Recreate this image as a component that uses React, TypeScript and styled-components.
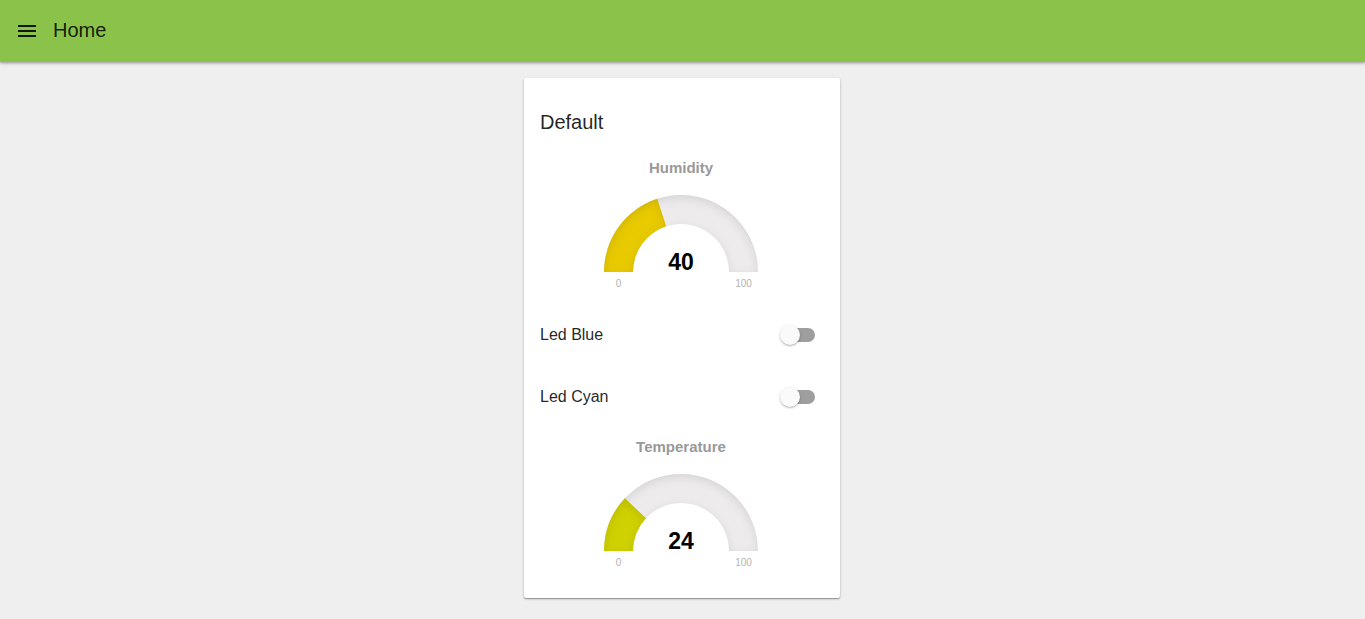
import React, { useId, useState } from "react";
import styled, { createGlobalStyle } from "styled-components";

const GlobalStyle = createGlobalStyle`
  *, *::before, *::after { box-sizing: border-box; }
  body {
    margin: 0;
    min-height: 100vh;
    background: #efefef;
    color: rgba(0, 0, 0, 0.87);
    font-family: "Liberation Sans", Arial, sans-serif;
  }
`;

const Toolbar = styled.header`
  display: flex;
  align-items: center;
  gap: 14px;
  height: 62px;
  padding: 0 15px;
  background: #8bc34a;
  box-shadow: 0 1px 3px rgba(0, 0, 0, 0.4);
`;

const MenuButton = styled.button`
  display: flex;
  width: 24px;
  height: 24px;
  padding: 0;
  border: 0;
  background: none;
  color: rgba(0, 0, 0, 0.87);
  cursor: pointer;
`;

const PageTitle = styled.h1`
  margin: 0;
  font-size: 20px;
  font-weight: 400;
  line-height: 24px;
  padding-bottom: 2px;
`;

const Main = styled.main`
  display: flex;
  justify-content: center;
  padding: 16px 17px 16px 16px;
`;

const Card = styled.section`
  width: 100%;
  max-width: 316px;
  padding: 17px 16px 15px;
  border-radius: 2px;
  background: #fff;
  box-shadow: 0 1px 3px rgba(0, 0, 0, 0.2), 0 1px 1px rgba(0, 0, 0, 0.28);
`;

const CardTitle = styled.h2`
  margin: 0;
  font-size: 20px;
  font-weight: 400;
  line-height: 54px;
`;

const GaugeBox = styled.figure`
  display: flex;
  flex-direction: column;
  align-items: center;
  height: 155px;
  margin: 0;
  padding: 10px 2px 0 0;
`;

const GaugeTitle = styled.figcaption`
  height: 36px;
  color: #999;
  font-size: 15px;
  font-weight: 700;
  line-height: 18px;
`;

const Dial = styled.div`
  position: relative;
  width: 154px;
  height: 77px;
`;

const DialArc = styled.svg`
  display: block;
`;

const DialValue = styled.output`
  position: absolute;
  right: 0;
  bottom: -4px;
  left: 0;
  color: #010101;
  font-size: 23px;
  font-weight: 700;
  line-height: 28px;
  text-align: center;
`;

const DialRange = styled.div`
  display: flex;
  justify-content: space-between;
  width: 154px;
  padding-top: 5px;
  color: #b3b3b3;
  font-size: 10px;
  line-height: 14px;
`;

const RangeLabel = styled.span`
  width: 29px;
  text-align: center;
`;

const SwitchRow = styled.label`
  display: flex;
  align-items: center;
  justify-content: space-between;
  height: 62px;
  padding-right: 8px;
  font-size: 16px;
  line-height: 20px;
  cursor: pointer;
`;

const Switch = styled.input`
  appearance: none;
  display: flex;
  align-items: center;
  width: 36px;
  height: 20px;
  margin: 0;
  cursor: pointer;

  &::before {
    content: "";
    width: 34px;
    height: 14px;
    margin-left: 1px;
    border-radius: 7px;
    background: #9e9e9e;
  }

  &::after {
    content: "";
    flex: none;
    width: 20px;
    height: 20px;
    margin-left: -35px;
    border-radius: 50%;
    background: #fafafa;
    box-shadow: 0 1px 3px rgba(0, 0, 0, 0.2), 0 1px 1px rgba(0, 0, 0, 0.14);
    transition: transform 0.1s;
  }

  &:checked::before { background: #c5e1a5; }
  &:checked::after { background: #8bc34a; transform: translateX(16px); }
`;

const OUTER = 77;
const INNER = 48;

// Half-ring sector running clockwise from the left end to the given fraction.
function sector(fraction: number) {
  const angle = Math.PI * fraction;
  const point = (r: number) =>
    `${OUTER - r * Math.cos(angle)} ${OUTER - r * Math.sin(angle)}`;
  return `M0 ${OUTER}A${OUTER} ${OUTER} 0 0 1 ${point(OUTER)}L${point(INNER)}A${INNER} ${INNER} 0 0 0 ${OUTER - INNER} ${OUTER}Z`;
}

type GaugeProps = { title: string; value: number; color: string };

function Gauge({ title, value, color }: GaugeProps) {
  const id = useId();
  return (
    <GaugeBox>
      <GaugeTitle>{title}</GaugeTitle>
      <Dial>
        <DialArc width="154" height="77" viewBox="0 0 154 77" aria-hidden="true">
          <defs>
            <filter id={id} x="-10%" y="-10%" width="120%" height="120%" colorInterpolationFilters="sRGB">
              <feOffset dy="3" />
              <feGaussianBlur stdDeviation="5" result="blur" />
              <feComposite in="SourceGraphic" in2="blur" operator="out" result="inverse" />
              <feFlood floodColor="#000" floodOpacity="0.1" />
              <feComposite in2="inverse" operator="in" result="shadow" />
              <feComposite in="shadow" in2="SourceGraphic" operator="over" />
            </filter>
          </defs>
          <path d={sector(1)} fill="#edebeb" filter={`url(#${id})`} />
          <path d={sector(value / 100)} fill={color} filter={`url(#${id})`} />
        </DialArc>
        <DialValue>{value}</DialValue>
      </Dial>
      <DialRange>
        <RangeLabel>0</RangeLabel>
        <RangeLabel>100</RangeLabel>
      </DialRange>
    </GaugeBox>
  );
}

function SwitchItem({ label }: { label: string }) {
  const [on, setOn] = useState(false);
  return (
    <SwitchRow>
      {label}
      <Switch type="checkbox" role="switch" checked={on} onChange={() => setOn(!on)} />
    </SwitchRow>
  );
}

export default function App() {
  return (
    <>
      <GlobalStyle />
      <Toolbar>
        <MenuButton type="button" aria-label="Menu">
          <svg width="24" height="24" viewBox="0 0 24 24" fill="currentColor" aria-hidden="true">
            <path d="M3 18h18v-2H3v2zm0-5h18v-2H3v2zm0-7v2h18V6H3z" />
          </svg>
        </MenuButton>
        <PageTitle>Home</PageTitle>
      </Toolbar>
      <Main>
        <Card>
          <CardTitle>Default</CardTitle>
          <Gauge title="Humidity" value={40} color="#e8ca00" />
          <SwitchItem label="Led Blue" />
          <SwitchItem label="Led Cyan" />
          <Gauge title="Temperature" value={24} color="#cfd100" />
        </Card>
      </Main>
    </>
  );
}
